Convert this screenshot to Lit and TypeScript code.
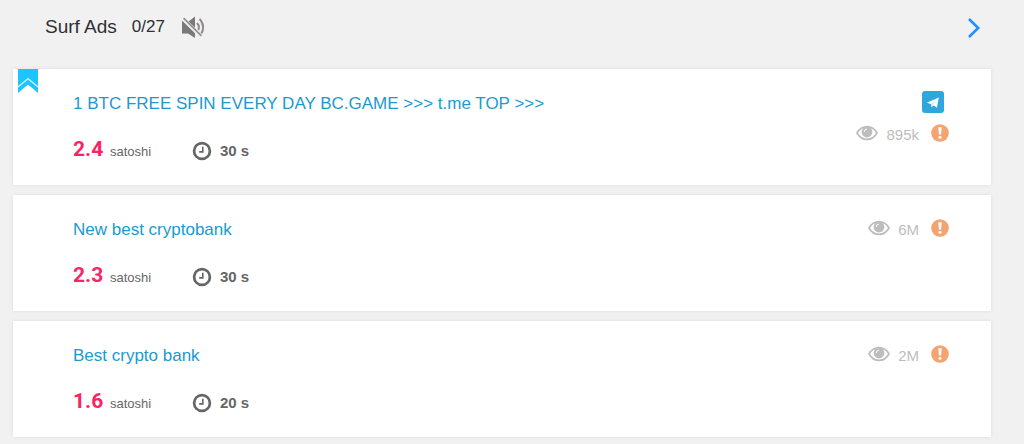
import { LitElement, html, css, svg, nothing } from "lit";
import { customElement, property } from "lit/decorators.js";

interface Ad {
  title: string;
  price: string;
  seconds: number;
  views: string;
  promoted?: boolean;
  telegram?: boolean;
}

const ads: Ad[] = [
  { title: "1 BTC FREE SPIN EVERY DAY BC.GAME >>> t.me TOP >>>", price: "2.4", seconds: 30, views: "895k", promoted: true, telegram: true },
  { title: "New best cryptobank", price: "2.3", seconds: 30, views: "6M" },
  { title: "Best crypto bank", price: "1.6", seconds: 20, views: "2M" },
];

const mutedIcon = svg`<svg width="24" height="24" viewBox="0 0 24 24" fill="#7b7878" aria-hidden="true">
  <path d="M1 5.4 14 18.2V23L7 18.4H1z"/>
  <path d="M7.6 6.4 14 1.5v11.2z"/>
  <path d="M2.6 3.2 20.4 20.8" stroke="#918e8e" stroke-width="1.7" fill="none"/>
  <path d="M16 8q3 3 1.3 7M18.6 3.8q6 7 1.8 14.6" fill="none" stroke="#8f8c8c" stroke-width="2"/>
</svg>`;

const chevronIcon = svg`<svg width="14" height="22" viewBox="0 0 14 22" aria-hidden="true">
  <path d="M2 2 11.2 11 2 20" fill="none" stroke="#1e90ff" stroke-width="2.6"/>
</svg>`;

const ribbonIcon = svg`<svg width="20" height="24" viewBox="0 0 20 24" aria-hidden="true">
  <path d="M0 0H20V24L10 15.6 0 24z" fill="#1cc5ff"/>
  <path d="M0 18 10 9.6 20 18" fill="none" stroke="#c2effc" stroke-width="1.4"/>
</svg>`;

const clockIcon = svg`<svg width="20" height="20" viewBox="0 0 20 20" fill="none" stroke="#666" aria-hidden="true">
  <circle cx="10" cy="10" r="7.9" stroke-width="2.7"/>
  <path d="M10.8 5.8V10.9H7.2" stroke-width="1.6"/>
</svg>`;

const eyeIcon = svg`<svg width="22" height="16" viewBox="0 0 22 16" aria-hidden="true">
  <path d="M1 8Q4.6 1.6 11 1.6T21 8Q17.4 14.4 11 14.4T1 8z" fill="none" stroke="#bdbdbd" stroke-width="1.7"/>
  <circle cx="11" cy="7" r="5.4" fill="#bdbdbd"/>
  <path d="M8.2 6.6Q8.4 4.3 10.6 4" fill="none" stroke="#fff" stroke-width="1" stroke-linecap="round"/>
</svg>`;

const warnIcon = svg`<svg width="18" height="18" viewBox="0 0 18 18" aria-hidden="true">
  <circle cx="9" cy="9" r="8.8" fill="#f4a470"/>
  <path d="M7.3 3.2h3.4l-.6 7.4H7.9z" fill="#fff"/>
  <circle cx="9" cy="13.3" r="1.5" fill="#fff"/>
</svg>`;

const telegramIcon = svg`<svg width="22" height="22" viewBox="0 0 22 22" aria-hidden="true">
  <rect width="22" height="22" rx="3" fill="#2fa6dc"/>
  <path d="M4.8 11.8 16.8 6.6 15 16.8 11.6 14.4 9.5 16.2 8.8 13z" fill="#fff"/>
  <path d="M9.2 13.2 14.4 9 10.5 13.8 9.6 15.8z" fill="#b9dff0"/>
</svg>`;

@customElement("surf-ad")
class SurfAd extends LitElement {
  @property({ attribute: false }) ad!: Ad;

  static styles = css`
    :host {
      display: block;
    }
    .card {
      position: relative;
      display: flex;
      justify-content: space-between;
      min-height: 116px;
      padding: 21px 42px 12px 60px;
      box-sizing: border-box;
      background: #fff;
      box-shadow: 0 0 4px rgba(0, 0, 0, 0.08);
    }
    .ribbon {
      position: absolute;
      top: 0;
      left: 5px;
    }
    svg {
      display: block;
    }
    .main {
      display: flex;
      flex-direction: column;
      gap: 17px;
    }
    .title {
      font-size: 17px;
      line-height: 28px;
      color: #1b9ad0;
      text-decoration: none;
    }
    .meta {
      display: flex;
      align-items: baseline;
      line-height: 28px;
      color: #666;
    }
    .price {
      width: 37px;
      font: 700 21px/28px Roboto, sans-serif;
      color: #f72565;
    }
    .unit {
      width: 82px;
      font-size: 13px;
    }
    .time {
      display: flex;
      align-items: baseline;
      gap: 8px;
      font-size: 15px;
      font-weight: 700;
    }
    .time svg {
      align-self: center;
    }
    .side {
      display: flex;
      flex-direction: column;
      align-items: flex-end;
      gap: 8px;
    }
    .telegram {
      margin: 1px 5px 0 0;
    }
    .stats {
      display: flex;
      align-items: center;
      line-height: 20px;
      font-size: 15px;
      color: #bdbdbd;
    }
    .views {
      padding-top: 4px;
      margin: 0 12px 0 8px;
    }
    .report {
      padding: 0;
      border: 0;
      background: none;
      cursor: pointer;
    }
  `;

  render() {
    const { title, price, seconds, views, promoted, telegram } = this.ad;
    return html`
      <article class="card">
        ${promoted ? html`<span class="ribbon">${ribbonIcon}</span>` : nothing}
        <div class="main">
          <a class="title" href="#">${title}</a>
          <div class="meta">
            <span class="price">${price}</span>
            <span class="unit">satoshi</span>
            <span class="time">${clockIcon}<span>${seconds} s</span></span>
          </div>
        </div>
        <div class="side">
          ${telegram ? html`<a class="telegram" href="#" aria-label="Telegram">${telegramIcon}</a>` : nothing}
          <div class="stats">
            ${eyeIcon}
            <span class="views">${views}</span>
            <button class="report" aria-label="Report">${warnIcon}</button>
          </div>
        </div>
      </article>
    `;
  }
}

@customElement("app-root")
class AppRoot extends LitElement {
  static styles = css`
    :host {
      display: block;
      min-height: 100vh;
      box-sizing: border-box;
      padding: 0 33px 7px 13px;
      overflow: hidden;
      background: #f1f1f1;
      font-family: "Liberation Sans", Arial, sans-serif;
    }
    .head {
      display: flex;
      align-items: center;
      padding: 15px 10px 30px 32px;
      color: #2f2f33;
    }
    h1 {
      margin: 0 15px 0 0;
      font-size: 19px;
      line-height: 24px;
      font-weight: 400;
    }
    .count {
      margin-right: 16px;
      font-size: 17px;
      line-height: 24px;
    }
    button {
      padding: 0;
      border: 0;
      background: none;
      cursor: pointer;
    }
    svg {
      display: block;
    }
    .next {
      margin-left: auto;
      padding-top: 2px;
    }
    .list {
      display: flex;
      flex-direction: column;
      gap: 10px;
    }
  `;

  render() {
    return html`
      <header class="head">
        <h1>Surf Ads</h1>
        <span class="count">0/27</span>
        <button aria-label="Sound off">${mutedIcon}</button>
        <button class="next" aria-label="Next">${chevronIcon}</button>
      </header>
      <main class="list">${ads.map((ad) => html`<surf-ad .ad=${ad}></surf-ad>`)}</main>
    `;
  }
}
